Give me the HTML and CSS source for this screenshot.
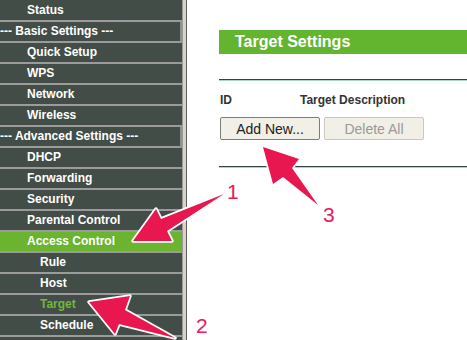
FILE: index.html
```html
<!DOCTYPE html>
<html>
<head>
<meta charset="utf-8">
<link rel="stylesheet" href="styles.css">
</head>
<body>
<div class="page">
  <nav class="sidebar">
    <div class="row item first">Status</div>
    <div class="row head">--- Basic Settings ---</div>
    <div class="row item">Quick Setup</div>
    <div class="row item">WPS</div>
    <div class="row item">Network</div>
    <div class="row item">Wireless</div>
    <div class="row head">--- Advanced Settings ---</div>
    <div class="row item">DHCP</div>
    <div class="row item">Forwarding</div>
    <div class="row item">Security</div>
    <div class="row item">Parental Control</div>
    <div class="row item active">Access Control</div>
    <div class="row sub">Rule</div>
    <div class="row sub">Host</div>
    <div class="row sub current">Target</div>
    <div class="row sub">Schedule</div>
  </nav>
  <div class="divider"></div>
  <main class="main">
    <div class="title">Target Settings</div>
    <div class="rule-line"></div>
    <div class="cols">
      <span class="col-id">ID</span>
      <span class="col-desc">Target Description</span>
    </div>
    <div class="buttons">
      <button class="btn">Add New...</button>
      <button class="btn disabled">Delete All</button>
    </div>
    <div class="rule-line second"></div>
  </main>
  <svg class="overlay" width="467" height="340" viewBox="0 0 467 340">
    <g class="arrow">
      <polygon points="133,241 156,209 161,219 224,194 167,231 172,241"/>
      <polygon points="89,302 130,296 125,310 175,338 119,324 115,334"/>
      <polygon points="263,147 299,159 292,168 318,205 283,177 273,184"/>
    </g>
    <text class="num" x="227" y="199">1</text>
    <text class="num" x="196" y="333">2</text>
    <text class="num" x="323" y="222">3</text>
  </svg>
</div>
</body>
</html>
```
FILE: styles.css
```css
html, body {
  margin: 0;
  padding: 0;
  background: #ffffff;
}
.page {
  position: relative;
  width: 467px;
  height: 340px;
  overflow: hidden;
  display: flex;
  font-family: "Liberation Sans", Arial, sans-serif;
}
.sidebar {
  width: 182px;
  flex: none;
  background: #434d47;
  border-right: 1px solid #9a9a9a;
  display: flex;
  flex-direction: column;
}
.row {
  height: 19px;
  line-height: 19px;
  border-bottom: 2px solid #9b9b9b;
  color: #ffffff;
  font-weight: bold;
  font-size: 12px;
  white-space: nowrap;
  box-sizing: content-box;
  flex: none;
}
.row.first {
  height: 20px;
  line-height: 20px;
}
.item { padding-left: 27px; }
.sub { padding-left: 40px; }
.head {
  padding-left: 0;
  border-right: 2px solid #8e9390;
}
.active { background: #6ab42f; }
.current { color: #72b63f; }
.divider {
  width: 3px;
  flex: none;
  background: #dcd0c9;
  border-right: 1px solid #5a5f5c;
}
.main {
  flex: 1;
  padding-left: 32px;
  padding-top: 30px;
}
.title {
  height: 24px;
  line-height: 24px;
  background: #63b52f;
  color: #ffffff;
  font-weight: bold;
  font-size: 16px;
  padding-left: 16px;
}
.rule-line {
  margin-top: 25px;
  border-top: 1px solid #34443e;
  border-bottom: 1px solid #a9d4c9;
  height: 0;
}
.rule-line.second {
  margin-top: 26px;
}
.cols {
  margin-top: 12px;
  height: 16px;
  font-size: 12px;
  font-weight: bold;
  color: #333333;
  display: flex;
}
.col-id { width: 80px; padding-left: 1px; }
.buttons {
  margin-top: 8px;
  display: flex;
  gap: 4px;
}
.btn {
  width: 100px;
  height: 23px;
  padding: 0;
  font-family: "Liberation Sans", Arial, sans-serif;
  font-size: 14px;
  color: #222222;
  background: #f1efe6;
  border: 1px solid #7d7d78;
  border-radius: 2px;
  margin-left: 1px;
}
.btn.disabled {
  color: #9a9a9a;
  border-color: #c9c7bf;
  margin-left: 0;
}
.overlay {
  position: absolute;
  left: 0;
  top: 0;
  pointer-events: none;
}
.arrow polygon {
  fill: #e8174f;
  stroke: #ffffff;
  stroke-width: 3.5;
  stroke-linejoin: round;
  paint-order: stroke;
}
.num {
  font-family: "Liberation Sans", Arial, sans-serif;
  font-size: 21px;
  fill: #e2205c;
}
```
